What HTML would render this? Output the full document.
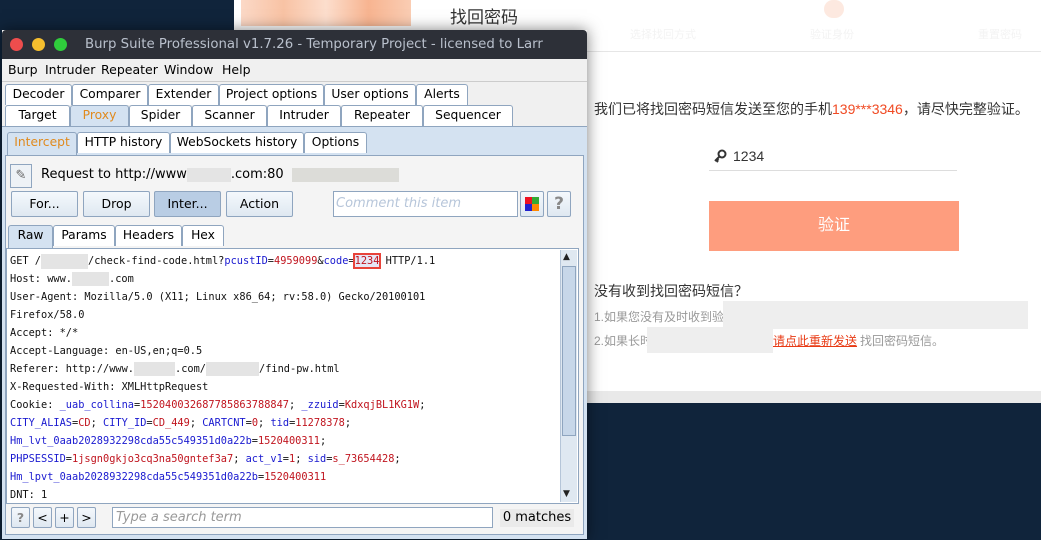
<!DOCTYPE html>
<html><head><meta charset="utf-8"><style>
*{margin:0;padding:0;box-sizing:border-box}
body{width:1041px;height:540px;background:#10243b;position:relative;overflow:hidden;font-family:"DejaVu Sans","Liberation Sans",sans-serif;font-size:13px;color:#000}
.a{position:absolute}
.web{left:234px;top:0;width:807px;height:403px;background:#fff}
.cn{font-family:"Liberation Sans","Noto Sans CJK SC",sans-serif}
.tab{position:absolute;height:21px;border:1px solid #8fa5bf;border-bottom:none;background:#fff;border-radius:3px 3px 0 0;text-align:center;line-height:19px;font-size:12.3px;white-space:nowrap}
.btn{position:absolute;height:26px;border:1px solid #8fa5bf;background:linear-gradient(#f4f8fc,#dfe8f1);border-radius:2px;text-align:center;line-height:24px;font-size:12.5px}
.code{font-family:"DejaVu Sans Mono","Liberation Mono",monospace;font-size:10.3px;line-height:18px;white-space:pre;color:#111}
.b{color:#1a1ad0}.r{color:#c0141e}
.blur{display:inline-block;background:#e4e4e4;height:14px;vertical-align:middle}
.m{position:absolute;top:62px;font-size:12.5px}
</style></head><body>
<div class="a web"></div>
<div class="a" style="left:234px;top:391px;width:807px;height:12px;background:#e9e9e9"></div>
<div class="a" style="left:241px;top:0;width:170px;height:26px;background:linear-gradient(90deg,#fbd2bd,#f7b894,#fcd8c4,#f6a77d,#f9c4a6);opacity:.85"></div>
<div class="a cn" style="left:450px;top:3px;font-size:17px;color:#333">找回密码</div>
<div class="a" style="left:824px;top:0;width:20px;height:18px;border-radius:10px;background:#fde9e0"></div>
<div class="a cn" style="left:630px;top:26px;font-size:11px;color:#f3f3f3">选择找回方式</div>
<div class="a cn" style="left:810px;top:26px;font-size:11px;color:#f3f3f3">验证身份</div>
<div class="a cn" style="left:978px;top:26px;font-size:11px;color:#f3f3f3">重置密码</div>
<div class="a" style="left:586px;top:51px;width:455px;height:1px;background:#e6e6e6"></div>
<div class="a cn" style="left:594px;top:99px;font-size:14px;color:#333">我们已将找回密码短信发送至您的手机<span style="color:#f04a23">139***3346</span>，请尽快完整验证。</div>
<svg class="a" style="left:713px;top:149px" width="14" height="14" viewBox="0 0 14 14"><circle cx="9" cy="5" r="3.5" fill="none" stroke="#333" stroke-width="2"/><path d="M7 7 L2 12 M3 11 L5 13 M4 10 L5.5 11.5" stroke="#333" stroke-width="2"/></svg>
<div class="a" style="left:733px;top:148px;font-size:14px;color:#333;font-family:'Liberation Sans',sans-serif">1234</div>
<div class="a" style="left:709px;top:170px;width:248px;height:1px;background:#ddd"></div>
<div class="a cn" style="left:709px;top:201px;width:250px;height:50px;background:#fe9d7e;color:#fff;font-size:16px;text-align:center;line-height:50px">验证</div>
<div class="a cn" style="left:594px;top:281px;font-size:14px;color:#333">没有收到找回密码短信？</div>
<div class="a cn" style="left:594px;top:308px;font-size:12px;color:#999">1.如果您没有及时收到验</div>
<div class="a" style="left:723px;top:301px;width:305px;height:28px;background:#eee"></div>
<div class="a cn" style="left:594px;top:332px;font-size:12px;color:#999">2.如果长时</div>
<div class="a" style="left:647px;top:327px;width:126px;height:26px;background:#eee"></div>
<div class="a cn" style="left:773px;top:332px;font-size:12px;color:#e83a14;text-decoration:underline">请点此重新发送</div>
<div class="a cn" style="left:860px;top:332px;font-size:12px;color:#999">找回密码短信。</div>

<div class="a" style="left:2px;top:30px;width:585px;height:509px;background:#f0f0f0;box-shadow:0 0 14px rgba(0,0,0,.5)"></div>
<div class="a" style="left:2px;top:30px;width:585px;height:29px;background:#2d3038;border-radius:4px 4px 0 0"></div>
<div class="a" style="left:10px;top:38px;width:13px;height:13px;border-radius:50%;background:#ee4d4d"></div>
<div class="a" style="left:32px;top:38px;width:13px;height:13px;border-radius:50%;background:#f5be2e"></div>
<div class="a" style="left:54px;top:38px;width:13px;height:13px;border-radius:50%;background:#2fcc3c"></div>
<div class="a" style="left:85px;top:37px;font-size:13.3px;color:#b9c0cc;white-space:nowrap;width:458px;overflow:hidden">Burp Suite Professional v1.7.26 - Temporary Project - licensed to Larry</div>
<div class="m" style="left:8px">Burp</div>
<div class="m" style="left:45px">Intruder</div>
<div class="m" style="left:101px">Repeater</div>
<div class="m" style="left:164px">Window</div>
<div class="m" style="left:222px">Help</div>
<div class="a" style="left:2px;top:81px;width:585px;height:1px;background:#ccc"></div>
<div class="tab" style="left:5px;top:84px;width:67px">Decoder</div>
<div class="tab" style="left:72px;top:84px;width:76px">Comparer</div>
<div class="tab" style="left:148px;top:84px;width:71px">Extender</div>
<div class="tab" style="left:219px;top:84px;width:105px">Project options</div>
<div class="tab" style="left:324px;top:84px;width:92px">User options</div>
<div class="tab" style="left:416px;top:84px;width:52px">Alerts</div>
<div class="tab" style="left:5px;top:105px;width:65px">Target</div>
<div class="tab" style="left:70px;top:105px;width:59px;background:#d4e2f1;color:#e08a1e;height:22px">Proxy</div>
<div class="tab" style="left:129px;top:105px;width:63px">Spider</div>
<div class="tab" style="left:192px;top:105px;width:75px">Scanner</div>
<div class="tab" style="left:267px;top:105px;width:74px">Intruder</div>
<div class="tab" style="left:341px;top:105px;width:82px">Repeater</div>
<div class="tab" style="left:423px;top:105px;width:90px">Sequencer</div>
<div class="a" style="left:2px;top:126px;width:585px;height:413px;background:#d4e2f1;border-top:1px solid #8fa5bf"></div>
<div class="tab" style="left:7px;top:132px;width:70px;background:#d4e2f1;color:#e08a1e;height:24px">Intercept</div>
<div class="tab" style="left:77px;top:132px;width:93px">HTTP history</div>
<div class="tab" style="left:170px;top:132px;width:134px">WebSockets history</div>
<div class="tab" style="left:304px;top:132px;width:63px">Options</div>
<div class="a" style="left:5px;top:155px;width:579px;height:380px;background:#f4f4f4;border:1px solid #8fa5bf"></div>
<div class="a" style="left:10px;top:164px;width:22px;height:24px;border:1px solid #8fa5bf;background:#eef2f6;color:#666;text-align:center;line-height:22px">&#x270E;</div>
<div class="a" style="left:41px;top:167px;font-size:13px">Request to http://www<span class="blur" style="width:44px"></span>.com:80 &nbsp;<span class="blur" style="width:107px;background:#dcdcd8"></span></div>
<div class="btn" style="left:11px;top:191px;width:67px">For...</div>
<div class="btn" style="left:83px;top:191px;width:67px">Drop</div>
<div class="btn" style="left:154px;top:191px;width:67px;background:#b9cde4">Inter...</div>
<div class="btn" style="left:226px;top:191px;width:67px">Action</div>
<div class="a" style="left:333px;top:191px;width:185px;height:26px;background:#fff;border:1px solid #8fa5bf;font-style:italic;color:#b7c6da;font-size:13px;line-height:24px;padding-left:2px">Comment this item</div>
<div class="btn" style="left:520px;top:191px;width:24px;padding:5px 0 0 4px"><div style="width:14px;height:14px;display:grid;grid-template-columns:7px 7px"><i style="background:#e12"></i><i style="background:#3a3"></i><i style="background:#22c"></i><i style="background:#f80"></i></div></div>
<div class="btn" style="left:547px;top:191px;width:24px;font-size:17px;color:#888;font-weight:bold">?</div>
<div class="tab" style="left:8px;top:225px;width:45px;background:#d4e2f1;height:24px">Raw</div>
<div class="tab" style="left:53px;top:225px;width:62px">Params</div>
<div class="tab" style="left:115px;top:225px;width:67px">Headers</div>
<div class="tab" style="left:182px;top:225px;width:42px">Hex</div>
<div class="a" style="left:6px;top:248px;width:573px;height:256px;background:#fff;border:1px solid #8fa5bf"></div>
<div class="a" style="left:560px;top:250px;width:17px;height:252px;background:#dfe8f1;border-left:1px solid #b5c5d8"></div>
<div class="a" style="left:562px;top:266px;width:14px;height:170px;background:#c7d7e9;border:1px solid #8fa5bf"></div>
<div class="a" style="left:563px;top:252px;font-size:9px;color:#222">▲</div>
<div class="a" style="left:563px;top:489px;font-size:9px;color:#222">▼</div>
<div class="a code" style="left:10px;top:252px">GET /<span class="blur" style="width:47px;height:15px"></span>/check-find-code.html?<span class="b">pcustID</span>=<span class="r">4959099</span>&amp;<span class="b">code</span>=<span class="r" style="outline:2px solid #e8433a;background:#e6e6f5">1234</span> HTTP/1.1
Host: www.<span class="blur" style="width:37px"></span>.com
User-Agent: Mozilla/5.0 (X11; Linux x86_64; rv:58.0) Gecko/20100101
Firefox/58.0
Accept: */*
Accept-Language: en-US,en;q=0.5
Referer: http://www.<span class="blur" style="width:41px"></span>.com/<span class="blur" style="width:53px"></span>/find-pw.html
X-Requested-With: XMLHttpRequest
Cookie: <span class="b">_uab_collina</span>=<span class="r">152040032687785863788847</span>; <span class="b">_zzuid</span>=<span class="r">KdxqjBL1KG1W</span>;
<span class="b">CITY_ALIAS</span>=<span class="r">CD</span>; <span class="b">CITY_ID</span>=<span class="r">CD_449</span>; <span class="b">CARTCNT</span>=<span class="r">0</span>; <span class="b">tid</span>=<span class="r">11278378</span>;
<span class="b">Hm_lvt_0aab2028932298cda55c549351d0a22b</span>=<span class="r">1520400311</span>;
<span class="b">PHPSESSID</span>=<span class="r">1jsgn0gkjo3cq3na50gntef3a7</span>; <span class="b">act_v1</span>=<span class="r">1</span>; <span class="b">sid</span>=<span class="r">s_73654428</span>;
<span class="b">Hm_lpvt_0aab2028932298cda55c549351d0a22b</span>=<span class="r">1520400311</span>
DNT: 1</div>
<div class="btn" style="left:11px;top:507px;width:19px;height:21px;line-height:19px;color:#888;font-weight:bold">?</div>
<div class="btn" style="left:33px;top:507px;width:19px;height:21px;line-height:19px">&lt;</div>
<div class="btn" style="left:55px;top:507px;width:19px;height:21px;line-height:19px">+</div>
<div class="btn" style="left:77px;top:507px;width:19px;height:21px;line-height:19px">&gt;</div>
<div class="a" style="left:112px;top:507px;width:381px;height:21px;background:#fff;border:1px solid #8fa5bf;font-style:italic;color:#999;line-height:19px;padding-left:3px">Type a search term</div>
<div class="a" style="left:500px;top:509px;width:74px;height:18px;background:#eaeaea;text-align:center;line-height:18px">0 matches</div>
</body></html>
